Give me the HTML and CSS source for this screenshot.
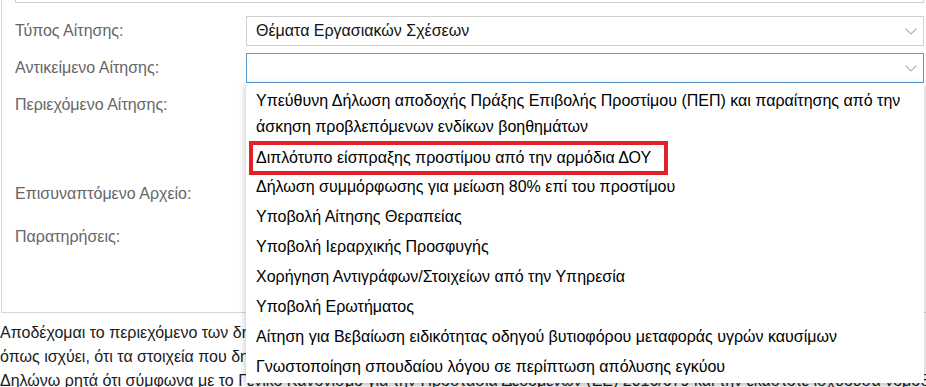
FILE: index.html
```html
<!DOCTYPE html>
<html lang="el">
  <head>
    <meta charset="UTF-8" />
    <meta name="viewport" content="width=device-width" />
    <title>Νέα Αίτηση</title>
    <link rel="stylesheet" href="styles.css">
  </head>
  <body>
    <div class="panel">
      <div class="prev-field"></div>
      <form class="request-form">
        <label class="field-label">Τύπος Αίτησης:</label>
        <div class="field">
          <div class="select">
            <span class="select-value">Θέματα Εργασιακών Σχέσεων</span>
            <svg class="chevron" width="12" height="7" viewBox="0 0 12 7"><polyline points="0.5,0.5 6,6 11.5,0.5" fill="none" stroke="#b5b5b5" stroke-width="1.2"/></svg>
          </div>
        </div>

        <label class="field-label">Αντικείμενο Αίτησης:</label>
        <div class="field field-open">
          <div class="select select-focus">
            <span class="select-value"></span>
            <svg class="chevron" width="12" height="7" viewBox="0 0 12 7"><polyline points="0.5,0.5 6,6 11.5,0.5" fill="none" stroke="#b5b5b5" stroke-width="1.2"/></svg>
          </div>
          <ul class="dropdown">
            <li>Υπεύθυνη Δήλωση αποδοχής Πράξης Επιβολής Προστίμου (ΠΕΠ) και παραίτησης από την άσκηση προβλεπόμενων ενδίκων βοηθημάτων</li>
            <li><span class="marked">Διπλότυπο είσπραξης προστίμου από την αρμόδια ΔΟΥ</span></li>
            <li>Δήλωση συμμόρφωσης για μείωση 80% επί του προστίμου</li>
            <li>Υποβολή Αίτησης Θεραπείας</li>
            <li>Υποβολή Ιεραρχικής Προσφυγής</li>
            <li>Χορήγηση Αντιγράφων/Στοιχείων από την Υπηρεσία</li>
            <li>Υποβολή Ερωτήματος</li>
            <li>Αίτηση για Βεβαίωση ειδικότητας οδηγού βυτιοφόρου μεταφοράς υγρών καυσίμων</li>
            <li>Γνωστοποίηση σπουδαίου λόγου σε περίπτωση απόλυσης εγκύου</li>
          </ul>
        </div>

        <label class="field-label">Περιεχόμενο Αίτησης:</label>
        <div class="field"><textarea class="text-box content-box"></textarea></div>

        <label class="field-label">Επισυναπτόμενο Αρχείο:</label>
        <div class="field"><div class="file-box"></div></div>

        <label class="field-label">Παρατηρήσεις:</label>
        <div class="field"><textarea class="text-box notes-box"></textarea></div>
      </form>
    </div>
    <div class="consent">
      <div class="consent-line">Αποδέχομαι το περιεχόμενο των δηλώσεων που περιλαμβάνονται στην παρούσα αίτηση και δηλώνω υπεύθυνα</div>
      <div class="consent-line">όπως ισχύει, ότι τα στοιχεία που δηλώνω είναι αληθή και ότι έλαβα γνώση των όρων χρήσης.</div>
      <div class="consent-line">Δηλώνω ρητά ότι σύμφωνα με το Γενικό Κανονισμό για την Προστασία Δεδομένων (ΕΕ) 2016/679 και την εκάστοτε ισχύουσα νομοθεσία</div>
    </div>
  </body>
</html>
```
FILE: styles.css
```css
body {
  margin: 0;
  overflow: hidden;
  font-family: "Liberation Sans", Arial, sans-serif;
  font-size: 16px;
  color: #222;
  background: #fff;
}
.panel {
  margin-left: 1px;
  width: 960px;
  border: 1px solid #d6d6d6;
  border-top: none;
  padding: 0 0 12px 13px;
  box-sizing: border-box;
}
.prev-field {
  width: 909px;
  height: 20px;
  margin-top: -17px;
  border: 1px solid #d0d0d0;
  box-sizing: border-box;
}
.request-form {
  display: grid;
  grid-template-columns: 231px 678px;
  grid-template-rows: 30px 30px 82px 36px 78px;
  row-gap: 7px;
  margin-top: 13px;
}
.field-label {
  color: #666;
  line-height: 30px;
}
.field {
  position: relative;
}
.select {
  display: flex;
  align-items: center;
  justify-content: space-between;
  height: 30px;
  box-sizing: border-box;
  border: 1px solid #d0d0d0;
  padding: 0 6px 0 9px;
  color: #111;
}
.select-focus {
  border-color: #5a9bd5;
}
.chevron {
  margin-top: 1px;
}
.dropdown {
  position: absolute;
  top: 30px;
  left: 0;
  z-index: 2;
  width: 678px;
  height: 300px;
  box-sizing: border-box;
  margin: 0;
  padding: 3px 0 0;
  list-style: none;
  background: #fff;
  box-shadow: 0 2px 7px rgba(0, 0, 0, 0.28);
  color: #000;
}
.dropdown li {
  padding: 2px 10px;
  line-height: 26px;
}
.marked {
  display: inline-block;
  line-height: 20px;
  vertical-align: middle;
  padding-right: 10px;
  outline: 4px solid #e3202a;
  outline-offset: 3px;
}
.text-box {
  display: block;
  width: 100%;
  height: 100%;
  box-sizing: border-box;
  border: 1px solid #d0d0d0;
  resize: none;
}
.file-box {
  height: 30px;
  border: 1px solid #d0d0d0;
}
.consent {
  margin-top: 8px;
  line-height: 24px;
  color: #1a1a1a;
}
.consent-line {
  white-space: nowrap;
}
```
